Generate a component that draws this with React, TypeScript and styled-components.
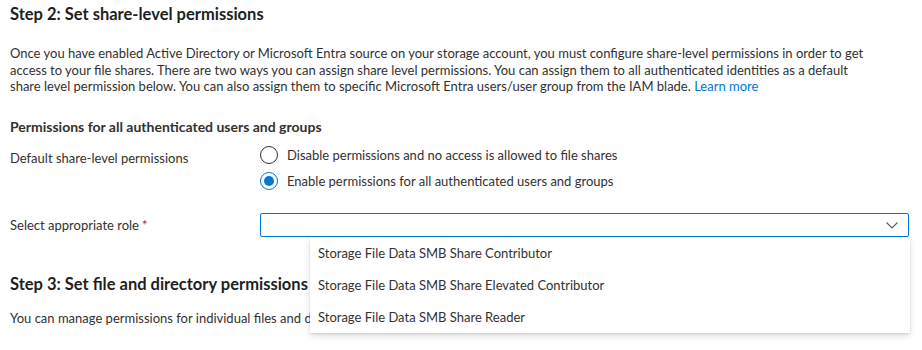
import React, { FC, useState } from 'react'
import styled, { createGlobalStyle } from 'styled-components'

const GlobalStyle = createGlobalStyle`
    html, body {
        margin: 0;
        padding: 0;
        background: #ffffff;
    }
    body {
        font-family: Lato, "Liberation Sans", sans-serif;
        color: #323130;
        font-size: 13px;
    }
`

const StyledPage = styled.div`
    width: 922px;
    height: 350px;
    overflow: hidden;
    padding: 3px 13px 0 10px;
    box-sizing: border-box;
    display: flex;
    flex-direction: column;
`
const StyledStepTitle = styled.h2<{ $top?: number }>`
    margin: ${props => props.$top || 0}px 0 0 0;
    font-size: 16.5px;
    font-weight: 700;
    line-height: 22px;
    color: #201f1e;
    white-space: nowrap;
`
const StyledText = styled.p<{ $top?: number }>`
    margin: ${props => props.$top || 0}px 0 0 0;
    line-height: 16.5px;
    white-space: nowrap;
`
const StyledLink = styled.a`
    color: #0078d4;
    text-decoration: none;
    cursor: pointer;
`
const StyledSubTitle = styled.h3`
    margin: 23px 0 0 0;
    font-size: 14px;
    font-weight: 700;
    line-height: 18px;
    color: #323130;
`
const StyledFormRow = styled.div<{ $top?: number }>`
    display: grid;
    grid-template-columns: 250px 1fr;
    align-items: start;
    margin-top: ${props => props.$top || 0}px;
`
const StyledLabel = styled.div<{ $pad?: number }>`
    padding-top: ${props => props.$pad || 0}px;
    line-height: 18px;
`
const StyledRequired = styled.span`
    color: #a4262c;
    margin-left: 3px;
`
const StyledRadioGroup = styled.div`
    display: flex;
    flex-direction: column;
    gap: 8px;
`
const StyledRadioOption = styled.label`
    display: flex;
    align-items: center;
    gap: 9px;
    line-height: 18px;
    cursor: pointer;
`
const StyledRadioCircle = styled.span<{ $checked: boolean }>`
    width: 18px;
    height: 18px;
    box-sizing: border-box;
    border-radius: 50%;
    border: 1px solid ${props => props.$checked ? '#0078d4' : '#323130'};
    display: flex;
    align-items: center;
    justify-content: center;
    &::after {
        content: '';
        width: 10px;
        height: 10px;
        border-radius: 50%;
        background: ${props => props.$checked ? '#0078d4' : 'transparent'};
    }
`
const StyledDropdownWrap = styled.div`
    position: relative;
`
const StyledDropdown = styled.div`
    height: 24px;
    box-sizing: border-box;
    border: 1px solid #0078d4;
    border-radius: 2px;
    display: flex;
    justify-content: flex-end;
    align-items: center;
    padding-right: 8px;
    cursor: pointer;
`
const StyledMenu = styled.div`
    position: absolute;
    top: 24px;
    left: 50px;
    right: -1px;
    background: #ffffff;
    box-shadow: 0 3.2px 7.2px rgba(0, 0, 0, 0.13), 0 0.6px 1.8px rgba(0, 0, 0, 0.11);
    display: flex;
    flex-direction: column;
    z-index: 2;
`
const StyledMenuItem = styled.div`
    height: 32px;
    line-height: 32px;
    padding: 0 8px;
    color: #323130;
    &:hover {
        background: #f3f2f1;
    }
`

const Chevron: FC = () => (
    <svg width="16" height="16" viewBox="0 0 16 16" fill="none">
        <path d="M2.5 5.5 L8 11 L13.5 5.5" stroke="#605e5c" strokeWidth="1.1" />
    </svg>
)

const options = [
    'Disable permissions and no access is allowed to file shares',
    'Enable permissions for all authenticated users and groups',
]

const roles = [
    'Storage File Data SMB Share Contributor',
    'Storage File Data SMB Share Elevated Contributor',
    'Storage File Data SMB Share Reader',
]

const App: FC = () => {
    const [selected, setSelected] = useState(1)

    return (
        <StyledPage>
            <GlobalStyle />
            <StyledStepTitle>Step 2: Set share-level permissions</StyledStepTitle>
            <StyledText $top={20}>
                Once you have enabled Active Directory or Microsoft Entra source on your storage account, you must configure share-level permissions in order to get<br />
                access to your file shares. There are two ways you can assign share level permissions. You can assign them to all authenticated identities as a default<br />
                share level permission below. You can also assign them to specific Microsoft Entra users/user group from the IAM blade. <StyledLink>Learn more</StyledLink>
            </StyledText>
            <StyledSubTitle>Permissions for all authenticated users and groups</StyledSubTitle>
            <StyledFormRow $top={10}>
                <StyledLabel $pad={3}>Default share-level permissions</StyledLabel>
                <StyledRadioGroup>
                    {options.map((o, i) => (
                        <StyledRadioOption key={o} onClick={() => setSelected(i)}>
                            <StyledRadioCircle $checked={selected === i} />
                            {o}
                        </StyledRadioOption>
                    ))}
                </StyledRadioGroup>
            </StyledFormRow>
            <StyledFormRow $top={23}>
                <StyledLabel $pad={3}>Select appropriate role<StyledRequired>*</StyledRequired></StyledLabel>
                <StyledDropdownWrap>
                    <StyledDropdown><Chevron /></StyledDropdown>
                    <StyledMenu>
                        {roles.map(r => <StyledMenuItem key={r}>{r}</StyledMenuItem>)}
                    </StyledMenu>
                </StyledDropdownWrap>
            </StyledFormRow>
            <StyledStepTitle $top={36}>Step 3: Set file and directory permissions</StyledStepTitle>
            <StyledText $top={15}>You can manage permissions for individual files and directories</StyledText>
        </StyledPage>
    )
}

export default App
